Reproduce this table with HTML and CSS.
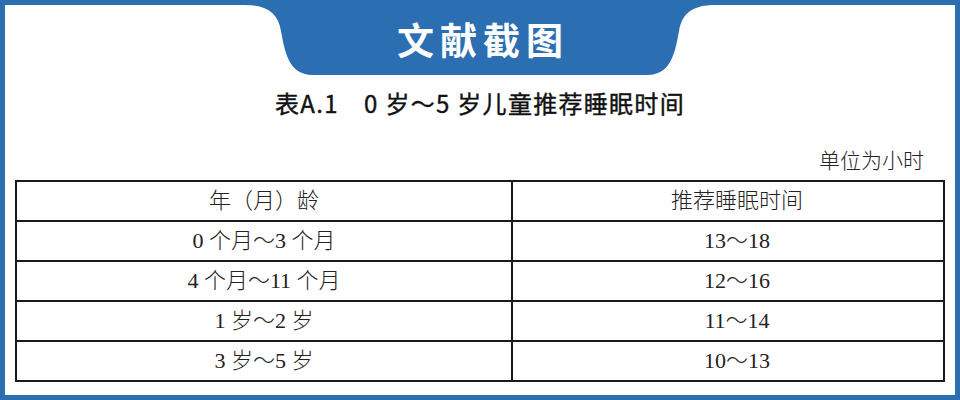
FILE: index.html
```html
<!DOCTYPE html>
<html lang="zh-CN">
<head>
<meta charset="utf-8">
<title>文献截图</title>
<link rel="stylesheet" href="styles.css">
</head>
<body>
<div class="frame">
  <div class="tab">
    <svg class="tab-bg" width="470" height="70" viewBox="0 0 470 70" aria-hidden="true">
      <path d="M0,0 H470 C448,0 437,8 434,26 C430,48 426,70 402,70 H68 C44,70 40,48 36,26 C33,8 22,0 0,0 Z" fill="#2b6eb2"/>
    </svg>
    <span class="tab-title">文献截图</span>
  </div>
  <h1 class="caption">表A.1　0 岁～5 岁儿童推荐睡眠时间</h1>
  <div class="unit">单位为小时</div>
  <table class="data">
    <colgroup><col class="c1"><col class="c2"></colgroup>
    <tr><td>年（月）龄</td><td class="r">推荐睡眠时间</td></tr>
    <tr><td>0 个月～3 个月</td><td class="r">13～18</td></tr>
    <tr><td>4 个月～11 个月</td><td class="r">12～16</td></tr>
    <tr><td>1 岁～2 岁</td><td class="r">11～14</td></tr>
    <tr><td>3 岁～5 岁</td><td class="r">10～13</td></tr>
  </table>
</div>
</body>
</html>
```
FILE: styles.css
```css
html, body {
  margin: 0;
  padding: 0;
  background: #ffffff;
}
.frame {
  width: 960px;
  height: 400px;
  box-sizing: border-box;
  border: 5px solid #2b6eb2;
  background: #ffffff;
  display: flex;
  flex-direction: column;
}
.tab {
  position: relative;
  width: 470px;
  height: 70px;
  margin: 0 auto;
  display: flex;
  align-items: center;
  justify-content: center;
}
.tab-bg {
  position: absolute;
  left: 0;
  top: 0;
}
.tab-title {
  position: relative;
  color: #ffffff;
  font-family: "Noto Sans CJK SC", sans-serif;
  font-weight: 700;
  font-size: 37px;
  line-height: 40px;
  letter-spacing: 6px;
  padding-left: 6px;
  margin-top: -2px;
}
.caption {
  margin: 13px 0 0 0;
  text-align: center;
  font-family: "Noto Sans CJK SC", sans-serif;
  font-weight: 400;
  font-size: 24px;
  line-height: 30px;
  letter-spacing: 1.3px;
  color: #111111;
  -webkit-text-stroke: 0.4px #111111;
}
.unit {
  margin-top: 28px;
  align-self: flex-end;
  margin-right: 31px;
  font-family: "Liberation Serif", "Noto Sans CJK SC", serif;
  font-weight: 300;
  font-size: 21px;
  line-height: 30px;
  color: #222222;
}
.data {
  margin: 4px 10px 0 10px;
  width: 930px;
  border-collapse: collapse;
  border: 2px solid #1a1a1a;
  table-layout: fixed;
}
.data .c1 { width: 496px; }
.data td {
  border: 2px solid #1a1a1a;
  height: 38px;
  padding: 0;
  text-align: center;
  vertical-align: middle;
  font-family: "Liberation Serif", "Noto Sans CJK SC", serif;
  font-weight: 300;
  font-size: 22px;
  line-height: 24px;
  color: #222222;
}
.data td.r {
  padding-left: 18px;
}
```
